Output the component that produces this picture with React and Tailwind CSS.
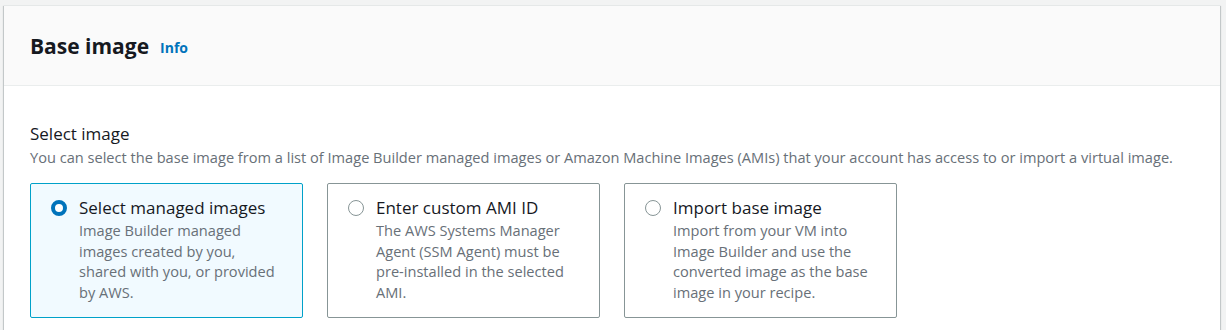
import React, { useState } from 'react';

const options = [
  {
    id: 'managed',
    label: 'Select managed images',
    description: 'Image Builder managed images created by you, shared with you, or provided by AWS.',
  },
  {
    id: 'custom',
    label: 'Enter custom AMI ID',
    description: 'The AWS Systems Manager Agent (SSM Agent) must be pre-installed in the selected AMI.',
  },
  {
    id: 'import',
    label: 'Import base image',
    description: 'Import from your VM into Image Builder and use the converted image as the base image in your recipe.',
  },
];

const Radio = ({ checked }) => (
  <span
    className={
      checked
        ? 'mt-[4px] block w-[16px] h-[16px] shrink-0 rounded-full border-[4px] border-[#0073bb] bg-white'
        : 'mt-[4px] block w-[16px] h-[16px] shrink-0 rounded-full border-[1.5px] border-[#879596] bg-white'
    }
  />
);

const App = () => {
  const [selected, setSelected] = useState('managed');

  return (
    <div className="min-h-[330px] bg-[#f2f3f3] pt-[5px] pl-[4px] pr-[6px] font-['Open_Sans',sans-serif] text-[#16191f]">
      <div className="bg-white border-t border-[#e5e8e8] shadow-[0_1px_1px_0_rgba(0,28,36,0.3),1px_1px_1px_0_rgba(0,28,36,0.15),-1px_1px_1px_0_rgba(0,28,36,0.15)]">
        {/* Header */}
        <div className="h-[80px] bg-[#fafafa] border-b border-[#eaeded] px-[26px] flex items-center">
          <h2 className="text-[21px] font-bold leading-[26px]">Base image</h2>
          <a href="#" className="ml-[11px] mt-[3px] text-[14px] font-bold text-[#0073bb]">
            Info
          </a>
        </div>

        {/* Body */}
        <div className="px-[26px] pt-[37px] pb-[20px]">
          <div className="text-[17px] leading-[22px]">Select image</div>
          <div className="text-[14.6px] leading-[20px] text-[#687078] mt-[2px]">
            You can select the base image from a list of Image Builder managed images or Amazon Machine Images (AMIs) that your account has access to or import a virtual image.
          </div>

          <div className="flex gap-[24px] mt-[16px]">
            {options.map((opt) => {
              const checked = selected === opt.id;
              return (
                <button
                  key={opt.id}
                  type="button"
                  onClick={() => setSelected(opt.id)}
                  className={
                    checked
                      ? 'w-[273px] h-[135px] text-left flex gap-[12px] pl-[20px] pr-[18px] pt-[12px] rounded-[2px] border border-[#00a1c9] bg-[#f1faff]'
                      : 'w-[273px] h-[135px] text-left flex gap-[12px] pl-[20px] pr-[18px] pt-[12px] rounded-[2px] border border-[#879596] bg-white'
                  }
                >
                  <Radio checked={checked} />
                  <div>
                    <div className="text-[17px] leading-[24px] text-[#16191f]">{opt.label}</div>
                    <div className="text-[14.6px] leading-[20.5px] text-[#687078]">{opt.description}</div>
                  </div>
                </button>
              );
            })}
          </div>
        </div>
      </div>
    </div>
  );
};

export default App;
